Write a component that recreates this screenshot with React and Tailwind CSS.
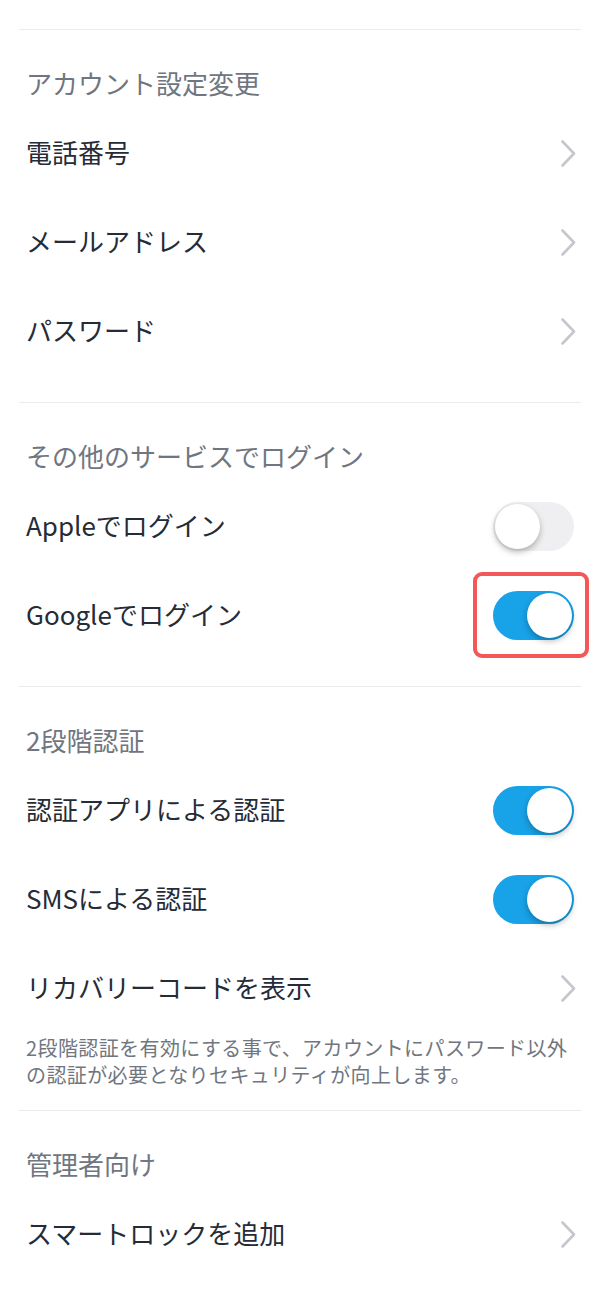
import { useState } from "react";

const font = { fontFamily: '"Noto Sans CJK JP", "Noto Sans", sans-serif' };

function Chevron() {
  return (
    <svg width="17" height="29" viewBox="0 0 17 29" fill="none" className="mr-[3px]">
      <path d="M2.5 2.5 L14 14.5 L2.5 26.5" stroke="#c6c7cc" strokeWidth="2.6" strokeLinecap="round" strokeLinejoin="round" />
    </svg>
  );
}

function Toggle({ on, onChange, highlight }) {
  return (
    <div className="relative">
      {highlight && (
        <div className="pointer-events-none absolute -left-[20px] -right-[15px] -top-[19px] -bottom-[18px] rounded-[9px] border-4 border-[#f45757]" />
      )}
      <button
        type="button"
        onClick={() => onChange(!on)}
        className={`flex h-[49px] w-[81px] items-center rounded-full p-[2px] transition ${on ? "justify-end bg-[#18a2e8]" : "justify-start bg-[#efeff1]"}`}
      >
        <span className="block h-[45px] w-[45px] rounded-full bg-white shadow-[0_3px_6px_rgba(0,0,0,0.28)]" />
      </button>
    </div>
  );
}

function Heading({ children }) {
  return (
    <div className="px-[7px] pb-[11px] pt-[38px] text-[26px] leading-[30px] text-[#70767f]">{children}</div>
  );
}

function Row({ label, right }) {
  return (
    <div className="flex h-[89px] items-center justify-between pl-[7px] pr-[7px]">
      <span className="-mt-[3px] text-[26px] leading-[30px] text-[#252c37]">{label}</span>
      {right}
    </div>
  );
}

function LinkRow({ label }) {
  return (
    <div className="flex h-[89px] items-center justify-between pl-[7px] pr-[1px]">
      <span className="-mt-[3px] text-[26px] leading-[30px] text-[#252c37]">{label}</span>
      <Chevron />
    </div>
  );
}

export default function App() {
  const [toggles, setToggles] = useState({ apple: false, google: true, app: true, sms: true });
  const set = (key) => (value) => setToggles((t) => ({ ...t, [key]: value }));

  return (
    <div className="min-h-[1303px] bg-white px-[19px] pt-[29px]" style={font}>
      <div className="h-px bg-[#ececee]" />
      <Heading>アカウント設定変更</Heading>
      <LinkRow label="電話番号" />
      <LinkRow label="メールアドレス" />
      <LinkRow label="パスワード" />
      <div className="h-[26px]" />

      <div className="h-px bg-[#ececee]" />
      <Heading>その他のサービスでログイン</Heading>
      <Row label="Appleでログイン" right={<Toggle on={toggles.apple} onChange={set("apple")} />} />
      <Row label="Googleでログイン" right={<Toggle on={toggles.google} onChange={set("google")} highlight />} />
      <div className="h-[26px]" />

      <div className="h-px bg-[#ececee]" />
      <Heading>2段階認証</Heading>
      <Row label="認証アプリによる認証" right={<Toggle on={toggles.app} onChange={set("app")} />} />
      <Row label="SMSによる認証" right={<Toggle on={toggles.sms} onChange={set("sms")} />} />
      <LinkRow label="リカバリーコードを表示" />
      <p className="whitespace-nowrap px-[7px] pb-[22px] pt-[1px] text-[20px] leading-[27px] tracking-[0.4px] text-[#70767f]">
        2段階認証を有効にする事で、アカウントにパスワード以外
        <br />
        の認証が必要となりセキュリティが向上します。
      </p>

      <div className="h-px bg-[#ececee]" />
      <Heading>管理者向け</Heading>
      <LinkRow label="スマートロックを追加" />
    </div>
  );
}
